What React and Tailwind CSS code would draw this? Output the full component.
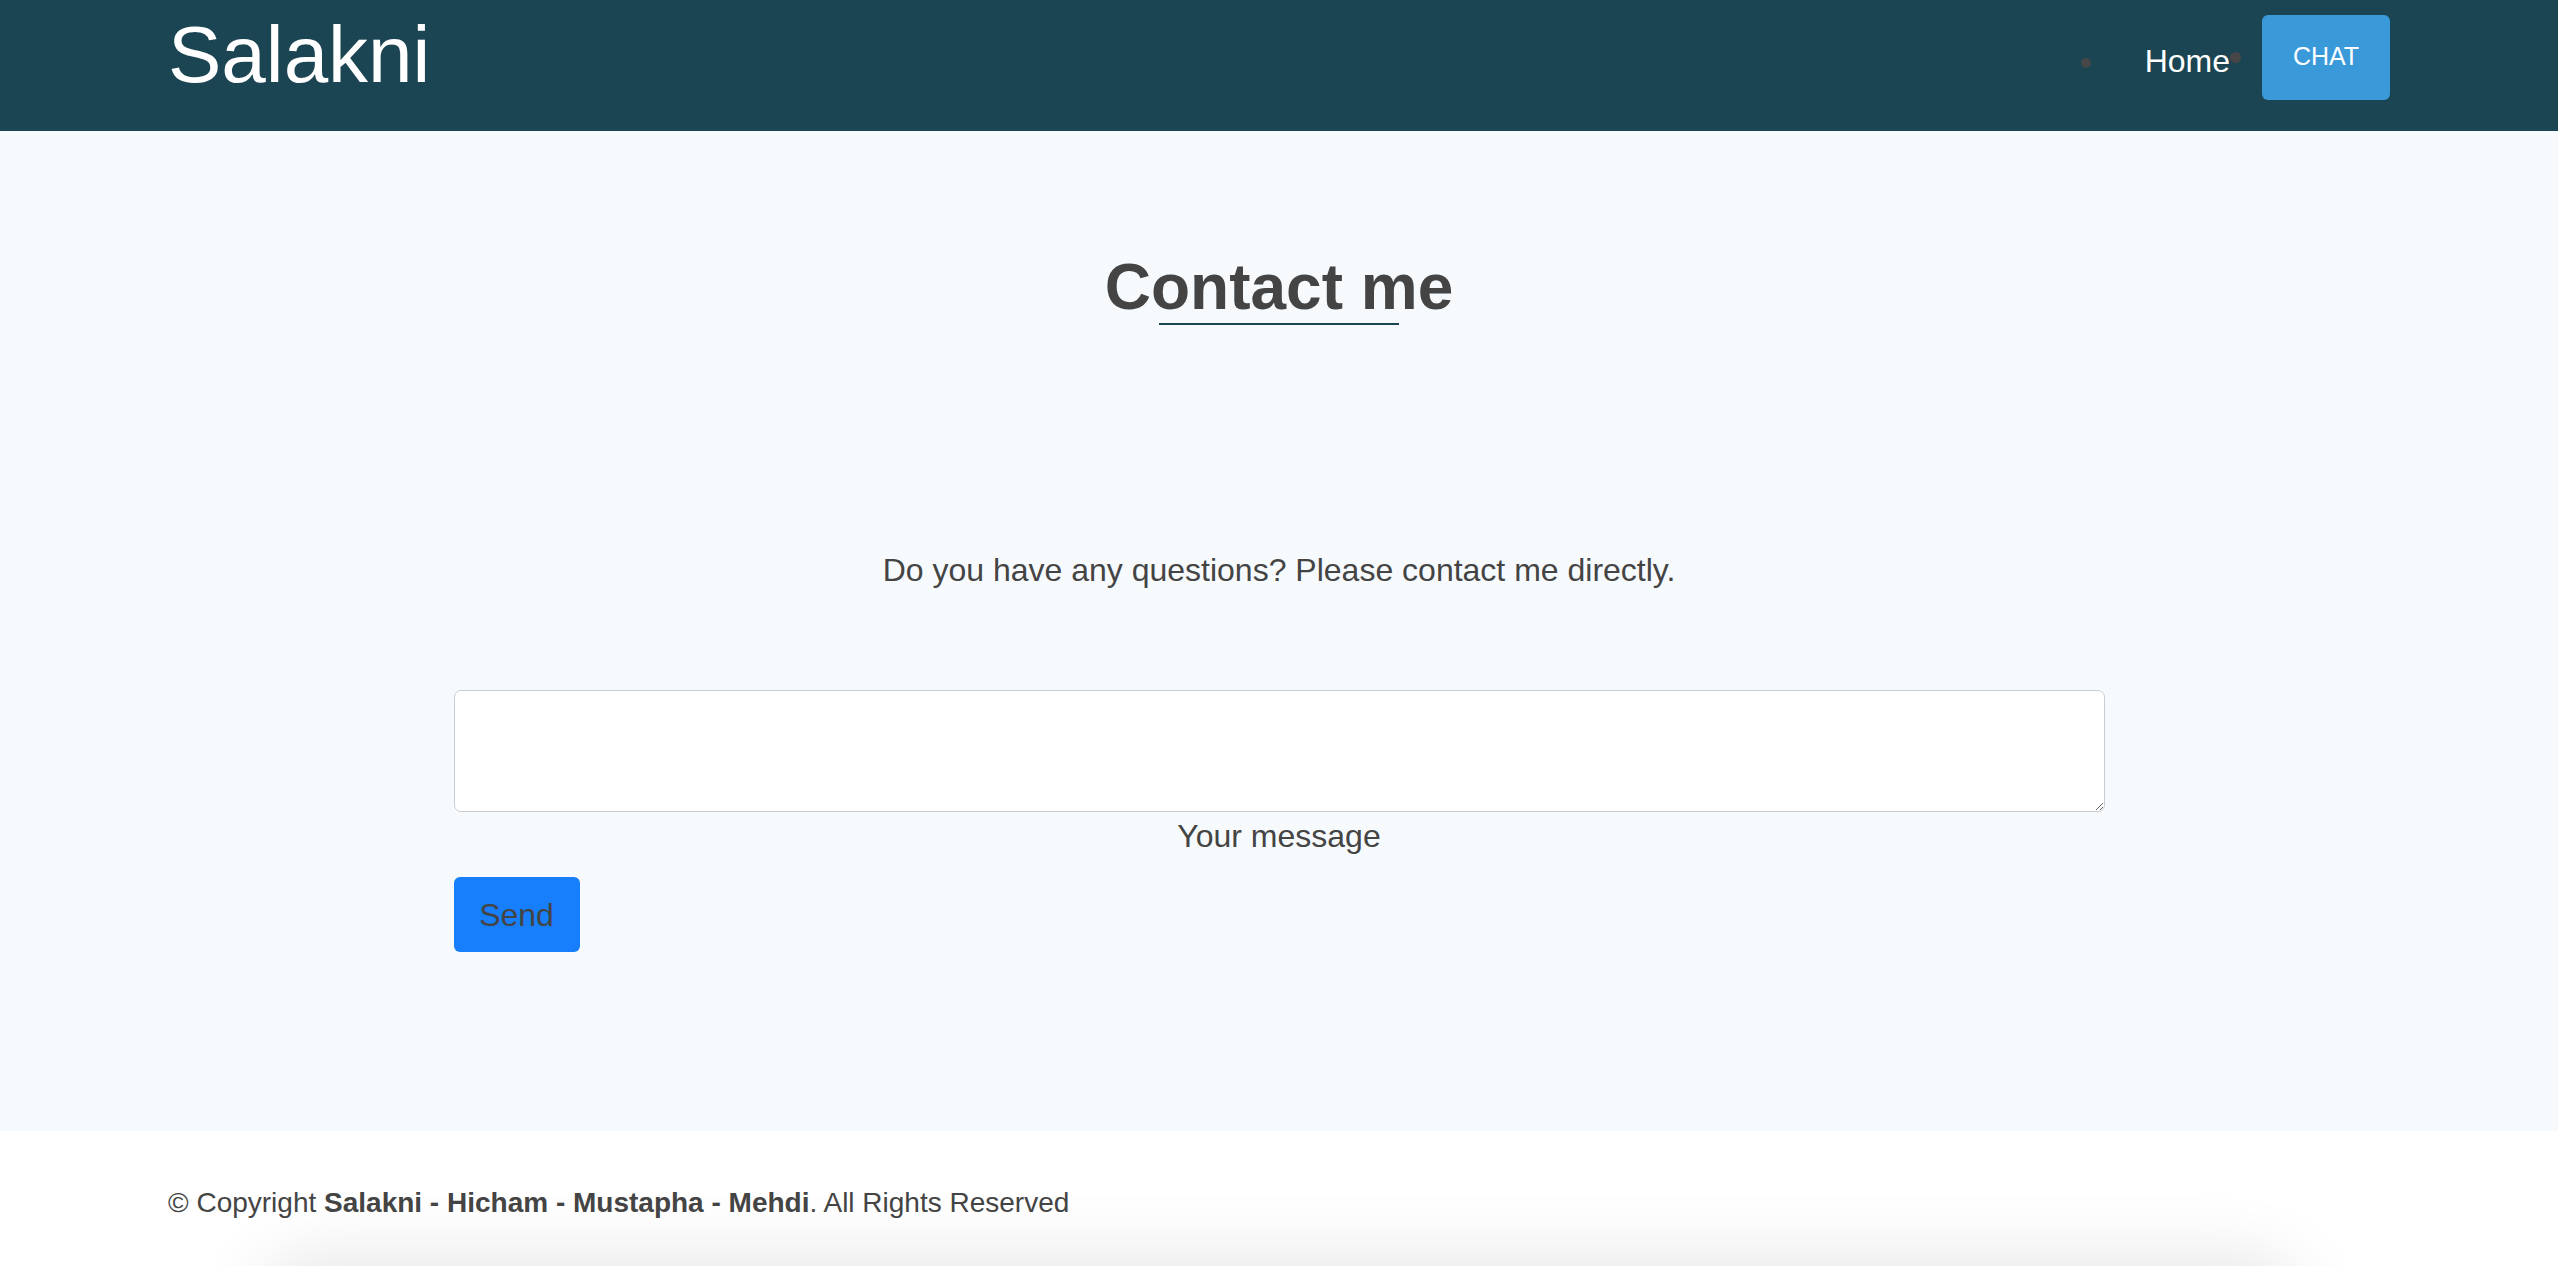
import React, { useState } from 'react';

const font = { fontFamily: '"Liberation Sans", Arial, Helvetica, sans-serif' };

const Header = () => (
    <header className="bg-[#1b4552] h-[131px] px-[168px] flex justify-between items-start">
        <a href="#" className="text-white text-[80px] leading-none mt-[15px]">Salakni</a>
        <nav className="mt-[15px] h-[85px] flex items-center">
            <span className="w-[10px] h-[10px] rounded-full bg-[#474747] mt-[11px]" />
            <a href="#" className="text-white text-[32px] leading-none ml-[54px] mt-[6px]">Home</a>
            <span className="w-[11px] h-[11px] rounded-full bg-[#474747] -mt-[1px]" />
            <a
                href="#"
                className="ml-[21px] w-[128px] h-[85px] rounded-[6px] bg-[#3a9ad9] text-white text-[25px] leading-none flex justify-center pt-[29px]"
            >
                CHAT
            </a>
        </nav>
    </header>
);

const ContactForm = () => {
    const [message, setMessage] = useState('');

    return (
        <section className="bg-[#f6fafd] pt-[124px] pb-[179px] text-[#444]">
            <h2 className="text-[64px] leading-none font-bold text-center">Contact me</h2>
            <div className="w-[240px] h-[2px] bg-[#1b4552] mx-auto mt-[4px]" />

            <p className="text-[32px] leading-none text-center mt-[229px]">
                Do you have any questions? Please contact me directly.
            </p>

            <form className="w-[1651px] mx-auto mt-[104px]" onSubmit={(e) => e.preventDefault()}>
                <textarea
                    value={message}
                    onChange={(e) => setMessage(e.target.value)}
                    className="block w-full h-[122px] bg-white border border-[#c9ced6] rounded-[7px] p-3 text-[28px] outline-none"
                    style={font}
                />
                <label className="block text-[32px] leading-none text-center mt-[8px]">Your message</label>
                <button
                    type="submit"
                    className="mt-[25px] w-[126px] h-[75px] rounded-[6px] bg-[#177ffb] text-[#444] text-[32px] leading-none cursor-pointer"
                >
                    Send
                </button>
            </form>
        </section>
    );
};

const Footer = () => (
    <footer className="bg-white pt-[58px] text-[#444] overflow-hidden">
        <p className="px-[168px] text-[28px] leading-none">
            © Copyright <strong className="font-bold">Salakni - Hicham - Mustapha - Mehdi</strong>. All Rights Reserved
        </p>
        <div className="mx-[290px] mt-[75px] h-[200px] bg-[#e8e8e8] rounded-[24px] shadow-[0_0_70px_35px_rgba(0,0,0,0.1)]" />
    </footer>
);

export default function App() {
    return (
        <div className="min-h-screen bg-white" style={font}>
            <Header />
            <ContactForm />
            <Footer />
        </div>
    );
}
